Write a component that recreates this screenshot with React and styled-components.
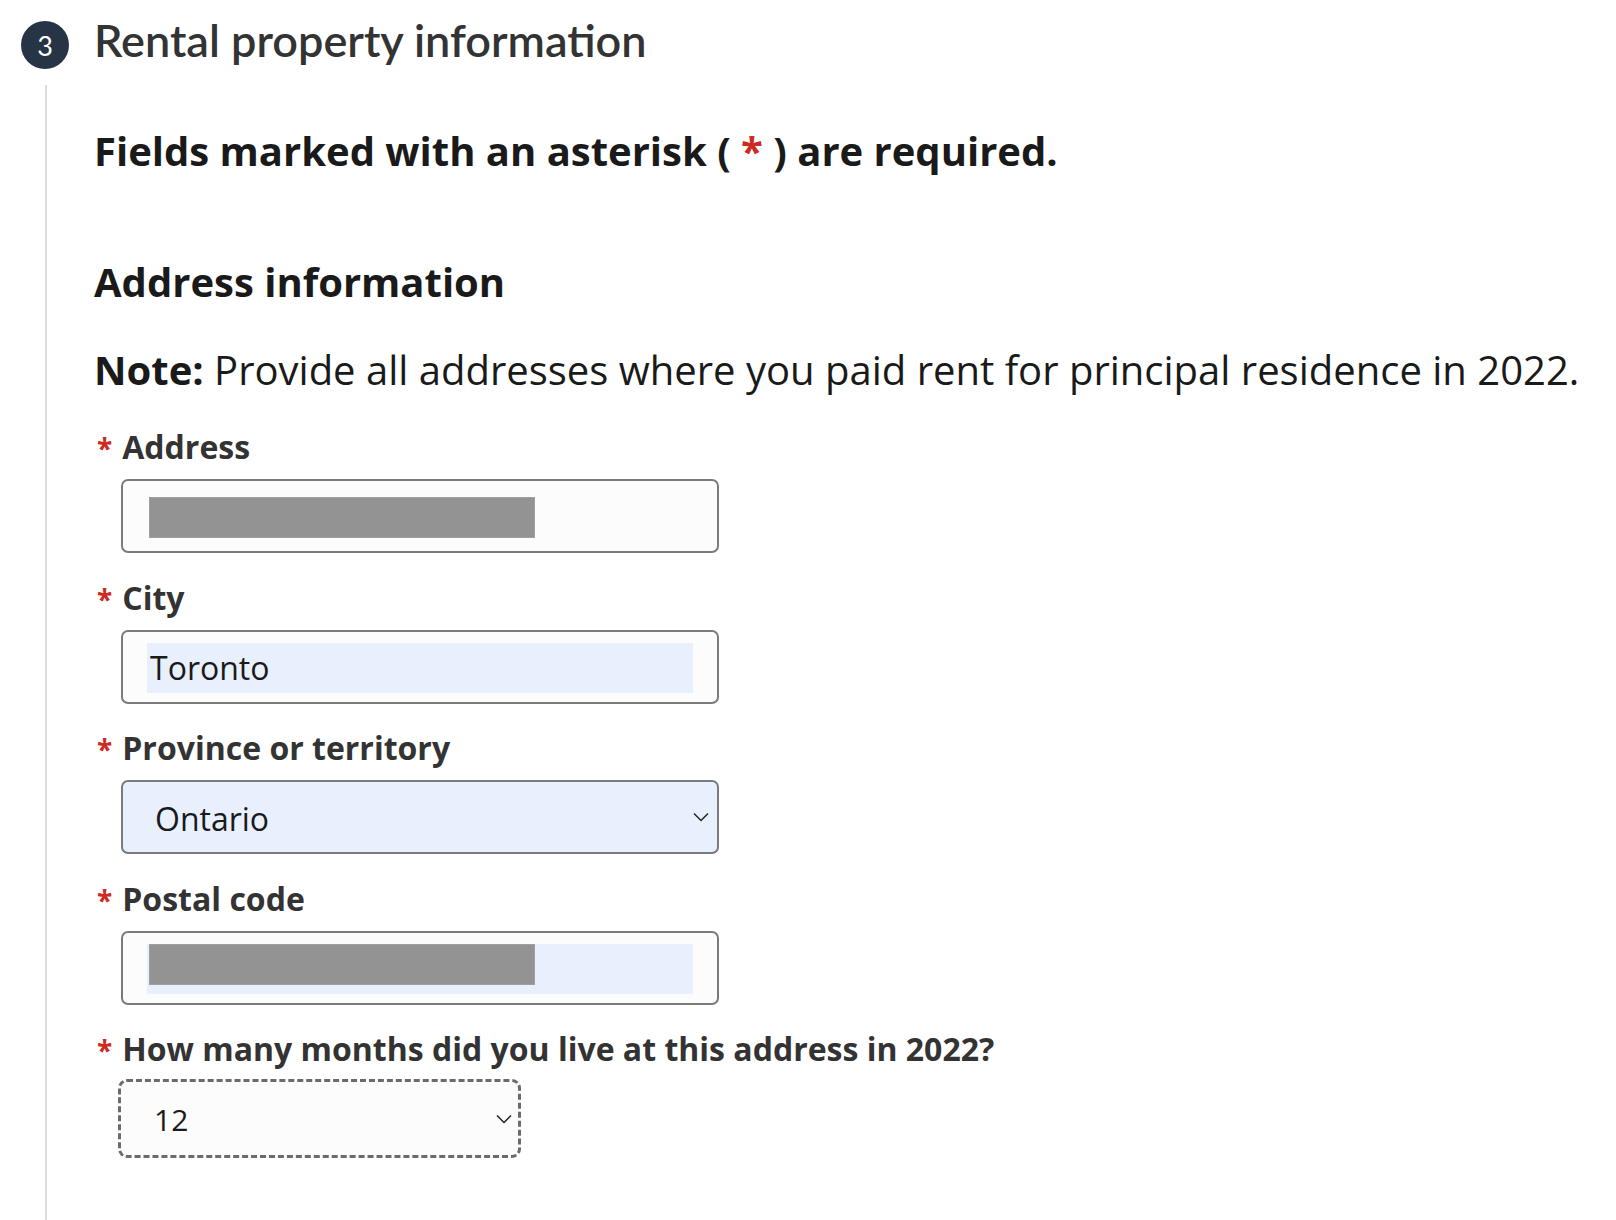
import styled, { createGlobalStyle } from 'styled-components'

const Global = createGlobalStyle`
  body {
    margin: 0;
    background: #fff;
    font-family: 'Open Sans', 'Noto Sans', sans-serif;
    color: #1a1a1a;
  }
`

const Page = styled.div`
  padding: 19px 0 0 21px;
`

const StepHeader = styled.div`
  display: flex;
  align-items: flex-start;
  gap: 25px;
`

const StepBadge = styled.div`
  flex: none;
  width: 48px;
  height: 48px;
  margin-top: 2px;
  border-radius: 50%;
  background: #263445;
  color: #fff;
  display: flex;
  align-items: center;
  justify-content: center;
  font-family: 'Lato', sans-serif;
  font-size: 27px;
`

const StepTitle = styled.h2`
  margin: -3px 0 0;
  font-family: 'Lato', sans-serif;
  font-weight: 600;
  font-size: 45px;
  line-height: 48px;
  color: #333;
`

const StepBody = styled.div`
  margin: 16px 0 0 24px;
  border-left: 2px solid #dcdcdc;
  padding: 38px 0 60px 47px;
  min-height: 1070px;
`

const Intro = styled.p`
  margin: 0;
  font-weight: 700;
  font-size: 40px;
  line-height: 56px;
`

const Section = styled.h3`
  margin: 75px 0 0;
  font-weight: 700;
  font-size: 40px;
  line-height: 56px;
`

const Note = styled.p`
  margin: 32px 0 0;
  font-size: 40px;
  line-height: 56px;
  & > b {
    font-weight: 700;
  }
`

const Field = styled.div`
  margin-top: ${(p) => p.gap || 24.5}px;
`

const Label = styled.label`
  display: flex;
  align-items: baseline;
  gap: 10px;
  padding-left: 3px;
  font-weight: 700;
  font-size: 32px;
  line-height: 40px;
  color: #333;
`

const Star = styled.span`
  color: #cc2b23;
  font-size: ${(p) => p.size || 28}px;
`

const Box = styled.div`
  position: relative;
  box-sizing: border-box;
  margin: 11px 0 0 27px;
  width: ${(p) => p.width || 598}px;
  height: ${(p) => p.height || 74}px;
  border: 2px solid #7b7b7b;
  border-radius: 7px;
  background: ${(p) => (p.filled ? '#e8f0fe' : '#fcfcfc')};
  padding: 11px 24px 9px 24px;
  display: flex;
  align-items: ${(p) => (p.select ? 'center' : 'stretch')};
  font-size: 32px;
  color: #1a1a1a;
`

const DashedBox = styled(Box)`
  margin: 9px 0 0 24px;
  border: 3px dashed #6b6b6b;
  border-radius: 9px;
  padding-left: 33px;
  font-size: 30px;
`

const Autofill = styled.div`
  flex: 1;
  display: flex;
  align-items: ${(p) => (p.top ? 'flex-start' : 'center')};
  background: ${(p) => (p.blue ? '#e8f0fe' : 'transparent')};
  padding-left: ${(p) => (p.blue ? 3 : 2)}px;
`

const Redacted = styled.div`
  width: 386px;
  height: 41px;
  margin-top: ${(p) => p.offset || 0}px;
  margin-left: ${(p) => p.shift || 0}px;
  background: #939393;
  border: 1px solid #a0a0a0;
  box-sizing: border-box;
`

const Value = styled.span`
  margin-left: ${(p) => p.indent || 0}px;
`

const Chevron = styled.svg`
  position: absolute;
  right: ${(p) => p.right || 8}px;
  top: 50%;
  transform: translateY(-50%);
  width: 16px;
  height: 10px;
`

const Arrow = (props) => (
  <Chevron viewBox="0 0 16 10" {...props}>
    <path d="M1 1.5 L8 8.5 L15 1.5" fill="none" stroke="#222" strokeWidth="1.5" />
  </Chevron>
)

export default function App() {
  return (
    <>
      <Global />
      <Page>
        <StepHeader>
          <StepBadge>3</StepBadge>
          <StepTitle>Rental property information</StepTitle>
        </StepHeader>
        <StepBody>
          <Intro>
            Fields marked with an asterisk ( <Star size={40}>*</Star> ) are required.
          </Intro>
          <Section>Address information</Section>
          <Note>
            <b>Note:</b> Provide all addresses where you paid rent for principal residence in 2022.
          </Note>

          <Field gap={29}>
            <Label><Star>*</Star>Address</Label>
            <Box>
              <Autofill top>
                <Redacted offset={5} />
              </Autofill>
            </Box>
          </Field>

          <Field>
            <Label><Star>*</Star>City</Label>
            <Box>
              <Autofill blue>
                <Value>Toronto</Value>
              </Autofill>
            </Box>
          </Field>

          <Field>
            <Label><Star>*</Star>Province or territory</Label>
            <Box filled select>
              <Value indent={8}>Ontario</Value>
              <Arrow />
            </Box>
          </Field>

          <Field>
            <Label><Star>*</Star>Postal code</Label>
            <Box>
              <Autofill blue top>
                <Redacted shift={-1} />
              </Autofill>
            </Box>
          </Field>

          <Field>
            <Label><Star>*</Star>How many months did you live at this address in 2022?</Label>
            <DashedBox width={403} height={79} select>
              <Value>12</Value>
              <Arrow right={6} />
            </DashedBox>
          </Field>
        </StepBody>
      </Page>
    </>
  )
}
